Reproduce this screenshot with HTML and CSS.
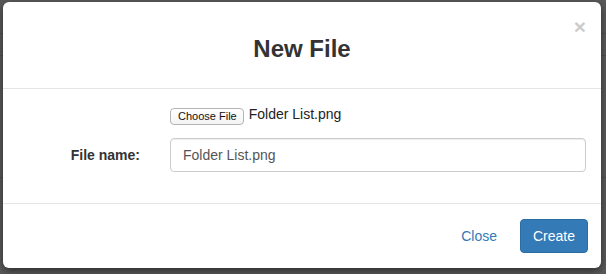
FILE: index.html
```html
<!DOCTYPE html>
<html>
<head>
<meta charset="utf-8">
<title>New File</title>
<link rel="stylesheet" href="styles.css">
</head>
<body>
<div class="modal">
  <div class="modal-header">
    <button class="close" type="button">×</button>
    <h3 class="modal-title">New File</h3>
  </div>
  <div class="modal-body">
    <div class="row file-row">
      <div class="col-label"></div>
      <div class="col-field"><span class="file-btn">Choose File</span><span class="file-name">Folder List.png</span></div>
    </div>
    <div class="row input-row">
      <label class="col-label label">File name:</label>
      <div class="col-field"><div class="input">Folder List.png</div></div>
    </div>
  </div>
  <div class="modal-footer">
    <span class="btn btn-link">Close</span>
    <span class="btn btn-primary">Create</span>
  </div>
</div>
</body>
</html>
```
FILE: styles.css
```css
html, body {
  margin: 0;
  padding: 0;
}
body {
  width: 606px;
  height: 274px;
  overflow: hidden;
  box-sizing: border-box;
  padding: 2px 5px 0 3px;
  background-color: #5a5a5a;
  background-image:
    linear-gradient(to bottom, transparent 33px, #4e4e4e 33px, #4e4e4e 34px, transparent 34px),
    linear-gradient(to bottom, transparent 55px, #4e4e4e 55px, #4e4e4e 56px, transparent 56px),
    linear-gradient(to bottom, transparent 177px, #4e4e4e 177px, #4e4e4e 178px, transparent 178px);
  font-family: "Liberation Sans", Arial, sans-serif;
  font-size: 14px;
  line-height: 20px;
  color: #333;
}
.modal {
  position: relative;
  width: 598px;
  height: 266px;
  background: #fff;
  border-radius: 6px;
  box-shadow: 0 3px 9px rgba(0, 0, 0, 0.5);
  overflow: hidden;
}
.modal-header {
  box-sizing: border-box;
  height: 87px;
  padding-top: 34px;
  border-bottom: 1px solid #e5e5e5;
  text-align: center;
}
.modal-title {
  margin: 0;
  font-size: 24px;
  line-height: 26px;
  font-weight: bold;
  color: #333;
}
.close {
  position: absolute;
  top: 14px;
  right: 15px;
  padding: 0;
  margin: 0;
  border: 0;
  background: transparent;
  font-family: "Liberation Sans", Arial, sans-serif;
  font-size: 21px;
  font-weight: bold;
  line-height: 21px;
  color: #000;
  opacity: 0.2;
  text-shadow: 0 1px 0 #fff;
}
.modal-body {
  padding: 15px 15px 31px 15px;
}
.row {
  display: flex;
}
.col-label {
  width: 122px;
  flex: none;
}
.col-field {
  margin-left: 30px;
  flex: 1;
}
.file-row {
  height: 20px;
  margin-bottom: 14px;
}
.file-btn {
  display: inline-block;
  box-sizing: border-box;
  height: 17px;
  padding: 0 6px 0 7px;
  border: 1px solid #b4b4b4;
  border-radius: 4px;
  background: linear-gradient(#ffffff, #f3f3f3);
  font-size: 11px;
  line-height: 15px;
  color: #111;
  vertical-align: -1px;
}
.file-name {
  margin-left: 5px;
  color: #222;
}
.input-row {
  align-items: center;
  height: 34px;
}
.label {
  text-align: right;
  font-weight: bold;
  color: #333;
}
.input {
  box-sizing: border-box;
  height: 34px;
  padding: 6px 12px;
  border: 1px solid #ccc;
  border-radius: 4px;
  box-shadow: inset 0 1px 1px rgba(0, 0, 0, 0.075);
  color: #555;
}
.modal-footer {
  display: flex;
  justify-content: flex-end;
  align-items: center;
  gap: 10px;
  padding: 15px 13px 15px 15px;
  border-top: 1px solid #e5e5e5;
}
.btn {
  display: inline-block;
  box-sizing: border-box;
  height: 34px;
  padding: 6px 12px;
  border: 1px solid transparent;
  border-radius: 4px;
  font-size: 14px;
  line-height: 20px;
}
.btn-link {
  color: #337ab7;
}
.btn-primary {
  color: #fff;
  background: #337ab7;
  border-color: #2e6da4;
}
```
